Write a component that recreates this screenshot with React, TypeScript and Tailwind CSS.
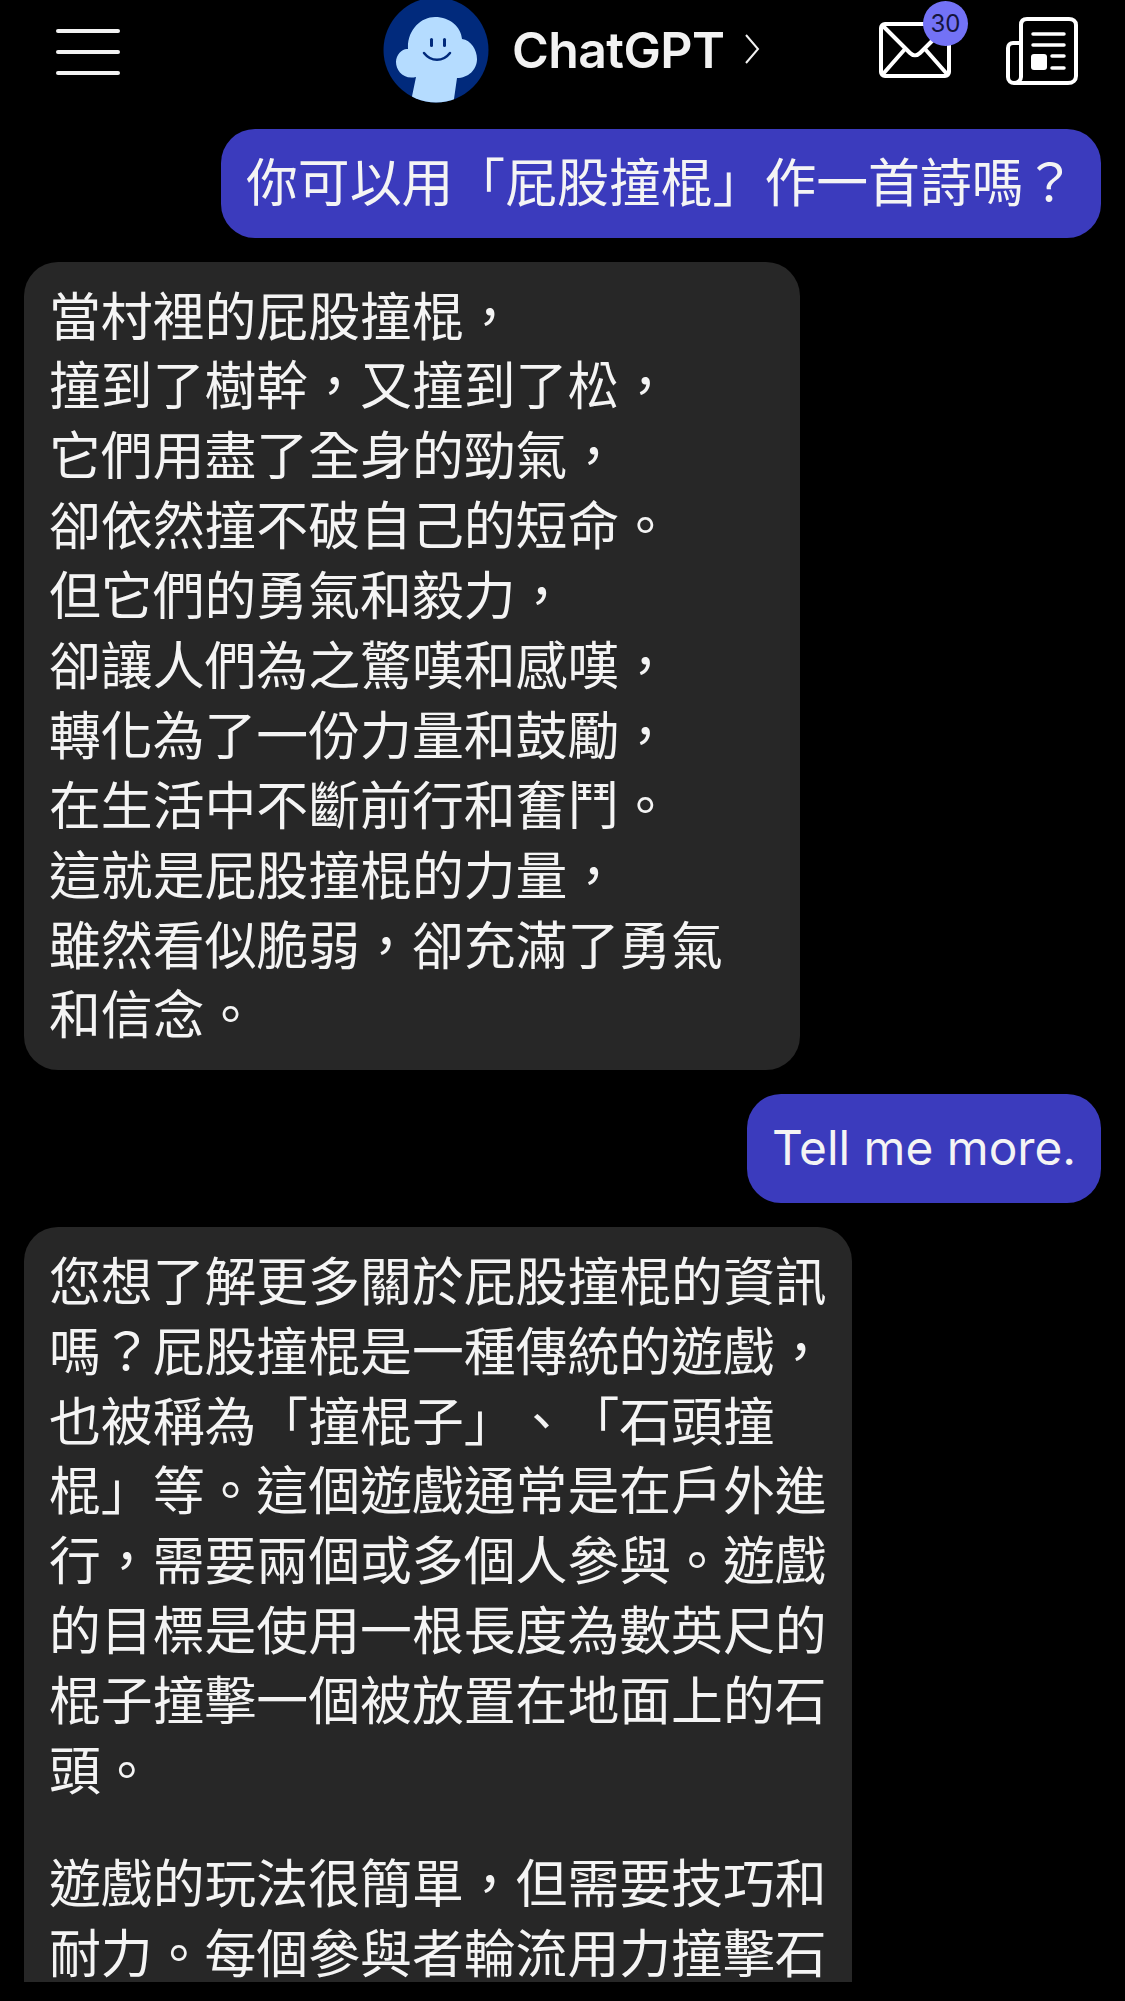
const CJK = "font-['Inter','Noto_Sans_CJK_TC',sans-serif]";

const poem = [
  '當村裡的屁股撞棍，',
  '撞到了樹幹，又撞到了松，',
  '它們用盡了全身的勁氣，',
  '卻依然撞不破自己的短命。',
  '但它們的勇氣和毅力，',
  '卻讓人們為之驚嘆和感嘆，',
  '轉化為了一份力量和鼓勵，',
  '在生活中不斷前行和奮鬥。',
  '這就是屁股撞棍的力量，',
  '雖然看似脆弱，卻充滿了勇氣',
  '和信念。',
];

const infoLines = [
  '您想了解更多關於屁股撞棍的資訊',
  '嗎？屁股撞棍是一種傳統的遊戲，',
  '也被稱為「撞棍子」、「石頭撞',
  '棍」等。這個遊戲通常是在戶外進',
  '行，需要兩個或多個人參與。遊戲',
  '的目標是使用一根長度為數英尺的',
  '棍子撞擊一個被放置在地面上的石',
  '頭。',
];

const rulesLines = ['遊戲的玩法很簡單，但需要技巧和', '耐力。每個參與者輪流用力撞擊石'];

const Lines = ({ lines }: { lines: string[] }) => (
  <>
    {lines.map(line => (
      <div key={line} className="h-[69.9px] leading-[69.9px] whitespace-nowrap">
        {line}
      </div>
    ))}
  </>
);

const Avatar = () => (
  <svg width="106" height="104" viewBox="0 0 106 104">
    <defs>
      <clipPath id="avatar-clip">
        <circle cx="53" cy="50" r="52.5" />
      </clipPath>
    </defs>
    <g clipPath="url(#avatar-clip)">
      <rect width="106" height="104" fill="#012a7c" />
      <path
        d="M27 106 L33 77 C20 80 13 70 13 62 C13 54 20 48 25 49 C24 30 38 17 52 17 C67 17 78 27 79 39 C88 40 94 50 94 59 C94 70 85 78 74 78 L70 106 Z"
        fill="#b5dcff"
      />
      <rect x="47" y="38" width="3" height="9" rx="1.5" fill="#012a7c" />
      <rect x="60" y="38" width="3" height="9" rx="1.5" fill="#012a7c" />
      <path d="M41 53 C48 62 60 62 67 53" fill="none" stroke="#012a7c" strokeWidth="2.5" strokeLinecap="round" />
    </g>
  </svg>
);

const MailIcon = () => (
  <svg width="72" height="56" viewBox="0 0 72 56" fill="none" stroke="white" strokeWidth="4" strokeLinejoin="round" strokeLinecap="round">
    <rect x="2" y="2" width="68" height="52" rx="4" />
    <path d="M4 4 L31 31 C34 34 38 34 41 31 L68 4" />
    <path d="M4 52 L26 27 M68 52 L46 27" />
  </svg>
);

const NewsIcon = () => (
  <svg width="72" height="68" viewBox="0 0 72 68" fill="none" stroke="white" strokeWidth="4" strokeLinecap="round" strokeLinejoin="round">
    <path d="M14 26 H7 C4 26 2 28 2 31 V60 C2 64 5 66 8 66 H62 C67 66 70 63 70 59 V8 C70 4 67 2 63 2 H21 C17 2 15 4 15 8 V60 C15 63 12 66 8 66" />
    <path d="M27 17 H58 M27 28 H58 M46 39 H58 M46 51 H58" strokeWidth="3.5" />
    <rect x="25" y="37" width="16" height="16" rx="3" fill="white" stroke="none" />
  </svg>
);

const Header = () => (
  <div className="h-[104px] shrink-0 flex items-start relative">
    <div className="w-[64px] ml-[56px] mt-[29px] flex flex-col gap-[17px]">
      <div className="h-[4px] rounded-full bg-[#f2f2f2]" />
      <div className="h-[4px] rounded-full bg-[#f2f2f2]" />
      <div className="h-[4px] rounded-full bg-[#f2f2f2]" />
    </div>
    <div className="ml-[263px] flex items-start w-[402px]">
      <Avatar />
      <span className="ml-[23px] mt-[22px] text-[50px] leading-[56px] font-semibold tracking-[-0.6px] text-[#f2f2f2] font-['Inter',sans-serif]">
        ChatGPT
      </span>
      <svg className="ml-[20px] mt-[33px]" width="16" height="32" viewBox="0 0 16 32" fill="none" stroke="#f2f2f2" strokeWidth="2">
        <path d="M2 2 L14 16 L2 30" />
      </svg>
    </div>
    <div className="relative ml-[94px] mt-[22px]">
      <MailIcon />
      <div className="absolute left-[44px] top-[-21px] w-[45px] h-[45px] rounded-full bg-[#7372f6] flex items-center justify-center text-[24px] text-[#14143c] font-['Inter',sans-serif]">
        30
      </div>
    </div>
    <div className="ml-[55px] mt-[17px]">
      <NewsIcon />
    </div>
  </div>
);

export default function App() {
  return (
    <div className={`w-[1125px] h-[2001px] bg-black overflow-hidden flex flex-col ${CJK} [text-spacing-trim:space-all]`}>
      <Header />
      <div className="h-[1878px] overflow-hidden flex flex-col text-[51.85px] text-[#f4f4f4] px-[24px]">
        <div className="self-end mt-[25px] w-[880px] h-[109px] shrink-0 rounded-[34px] bg-[#3b3bbd] px-[25px] leading-[109px] whitespace-nowrap">
          你可以用「屁股撞棍」作一首詩嗎？
        </div>
        <div className="self-start mt-[24px] w-[776px] shrink-0 rounded-[34px] bg-[#272727] px-[25px] pt-[20.5px] pb-[18.5px]">
          <Lines lines={poem} />
        </div>
        <div className="self-end mt-[24px] w-[354px] h-[109px] shrink-0 rounded-[34px] bg-[#3b3bbd] pl-[25px] leading-[109px] whitespace-nowrap text-[47.8px]">
          Tell me more.
        </div>
        <div className="self-start mt-[24px] w-[828px] shrink-0 rounded-[34px] bg-[#272727] px-[25px] pt-[21px] pb-[60px]">
          <Lines lines={infoLines} />
          <div className="h-[43px]" />
          <Lines lines={rulesLines} />
        </div>
      </div>
    </div>
  );
}
